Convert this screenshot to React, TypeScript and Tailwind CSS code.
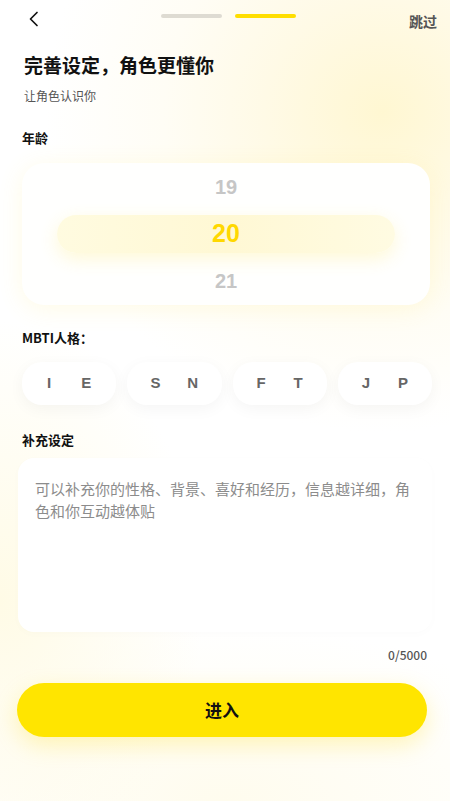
import React, { useState } from 'react';

const cjk = 'font-["Noto_Sans_CJK_SC","Noto_Sans",sans-serif]';
const latin = 'font-["Liberation_Sans",Arial,sans-serif]';

const mbtiPairs: [string, string][] = [
  ['I', 'E'],
  ['S', 'N'],
  ['F', 'T'],
  ['J', 'P'],
];

const App: React.FC = () => {
  const [text, setText] = useState('');

  return (
    <div
      className={`relative w-full h-[801px] overflow-hidden ${cjk} text-[#111] bg-white bg-[radial-gradient(ellipse_75%_40%_at_85%_14%,#fff7d2_0%,#fffae6_35%,#fffdf5_65%,rgba(255,255,255,0)_100%),radial-gradient(ellipse_45%_35%_at_0%_75%,#fffbe6_0%,rgba(255,255,255,0)_100%),radial-gradient(ellipse_80%_22%_at_50%_100%,#fffcee_0%,rgba(255,255,255,0)_100%)]`}
    >
      {/* header */}
      <div className="grid grid-cols-[1fr_auto_1fr] h-[36px]">
        <div className="pl-[28px] pt-[11px]">
          <svg width="12" height="16" viewBox="0 0 12 16" fill="none">
            <path d="M9 1.5L2.5 8L9 14.5" stroke="#111" strokeWidth="1.7" strokeLinecap="round" strokeLinejoin="round" />
          </svg>
        </div>
        <div className="flex gap-[13px] pt-[14px] pl-[7px]">
          <div className="w-[61px] h-[4px] rounded-full bg-[#dedbd2]" />
          <div className="w-[61px] h-[4px] rounded-full bg-[#ffde00]" />
        </div>
        <div className="flex justify-end pr-[13px] pt-[12px]">
          <span className="text-[14px] leading-[18px] font-bold text-[#555]">跳过</span>
        </div>
      </div>

      <div className="px-[22px]">
        <h1 className="mt-[16px] text-[19px] leading-[26px] font-bold pl-[2px]">完善设定，角色更懂你</h1>
        <p className="mt-[10px] text-[12px] leading-[16px] text-[#555] pl-[2px]">让角色认识你</p>

        <div className="mt-[25px] text-[13px] leading-[18px] font-bold">年龄</div>

        {/* age picker */}
        <div className="mt-[16px] w-[408px] h-[142px] rounded-[22px] bg-[#fffffe] shadow-[0_4px_24px_rgba(255,230,80,0.14)] flex flex-col">
          <div className={`h-[48px] flex items-center justify-center ${latin} text-[20px] font-bold text-[#c6c6c6]`}>19</div>
          <div className="h-[48px] flex items-center px-[35px]">
            <div
              className={`w-full h-[38px] rounded-full flex items-center justify-center bg-[linear-gradient(90deg,#fffbe0_0%,#fff8d4_50%,#fffbe2_100%)] shadow-[0_6px_18px_rgba(255,225,60,0.2)] ${latin} text-[25px] font-bold text-[#ffd800]`}
            >
              20
            </div>
          </div>
          <div className={`h-[48px] flex items-center justify-center ${latin} text-[20px] font-bold text-[#c6c6c6]`}>21</div>
        </div>

        <div className="mt-[24px] text-[13px] leading-[18px] font-bold">MBTI人格：</div>

        <div className="mt-[15px] w-[410px] grid grid-cols-4 gap-[11px]">
          {mbtiPairs.map(([a, b]) => (
            <div
              key={a}
              className={`h-[43px] rounded-[20px] bg-white shadow-[0_4px_16px_rgba(0,0,0,0.045)] flex items-center justify-around px-[10px] ${latin} text-[15px] font-bold text-[#666]`}
            >
              <span>{a}</span>
              <span>{b}</span>
            </div>
          ))}
        </div>

        <div className="mt-[26px] text-[13px] leading-[18px] font-bold">补充设定</div>
      </div>

      {/* textarea */}
      <div className="mt-[9px] mx-[18px] h-[174px] rounded-[16px] bg-white shadow-[0_2px_10px_rgba(0,0,0,0.015)] px-[17px] pt-[20px]">
        <textarea
          value={text}
          onChange={(e) => setText(e.target.value)}
          placeholder="可以补充你的性格、背景、喜好和经历，信息越详细，角色和你互动越体贴"
          className="w-full h-[140px] resize-none bg-transparent outline-none text-[15px] leading-[22px] text-[#333] placeholder:text-[#8c8c8c]"
        />
      </div>

      <div className="mt-[15px] pr-[23px] flex justify-end">
        <span className="text-[12px] leading-[16px] font-medium text-[#555]">{text.length}/5000</span>
      </div>

      <div className="mt-[20px] px-[17px] pr-[23px]">
        <button className="w-full h-[54px] rounded-full bg-[#ffe500] shadow-[0_8px_22px_rgba(255,220,0,0.25)] text-[17px] font-bold text-[#111]">
          进入
        </button>
      </div>
    </div>
  );
};

export default App;
